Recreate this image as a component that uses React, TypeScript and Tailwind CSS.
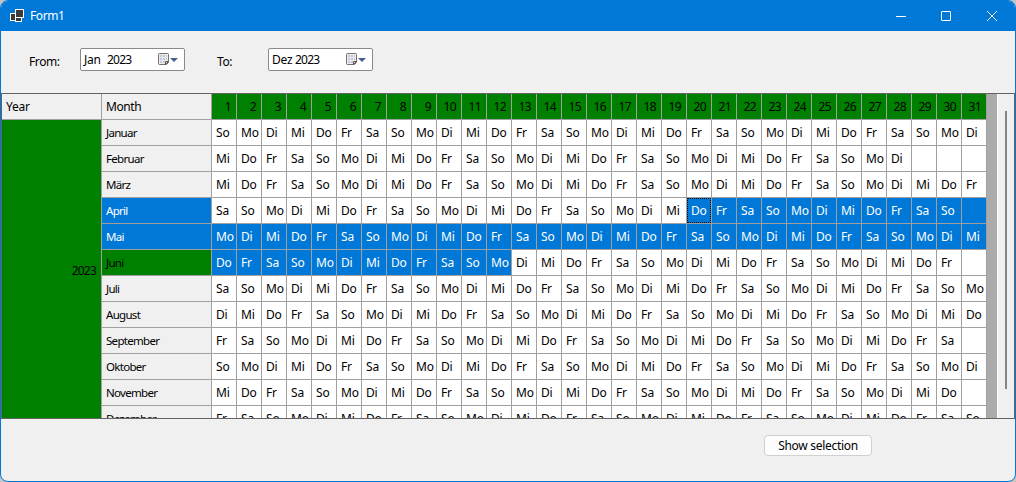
import React from "react";

const WEEKDAYS = ["So", "Mo", "Di", "Mi", "Do", "Fr", "Sa"];
const DAYS = Array.from({ length: 31 }, (_, i) => i + 1);

type Month = { name: string; start: number; length: number; from?: number; to?: number; header?: "blue" | "green" };

const MONTHS: Month[] = [
  { name: "Januar", start: 0, length: 31 },
  { name: "Februar", start: 3, length: 28 },
  { name: "März", start: 3, length: 31 },
  { name: "April", start: 6, length: 30, from: 20, to: 31, header: "blue" },
  { name: "Mai", start: 1, length: 31, from: 1, to: 31, header: "blue" },
  { name: "Juni", start: 4, length: 30, from: 1, to: 12, header: "green" },
  { name: "Juli", start: 6, length: 31 },
  { name: "August", start: 2, length: 31 },
  { name: "September", start: 5, length: 30 },
  { name: "Oktober", start: 0, length: 31 },
  { name: "November", start: 3, length: 30 },
  { name: "Dezember", start: 5, length: 31 },
];

const HEADER_STYLE = {
  blue: "bg-[#0078d7] text-white",
  green: "bg-[#008000] text-black",
  plain: "bg-[#f0f0f0] text-black",
};

function CalendarIcon() {
  return (
    <svg width="12" height="13" viewBox="0 0 12 13" className="shrink-0">
      <path d="M1.500 .5h8a1 1 0 0 1 1 1v8l-2 2h-7a1 1 0 0 1-1-1v-9a1 1 0 0 1 1-1z" fill="#c3cad6" stroke="#7b6f6b" />
      <path d="M1 1.500h9M1.500 1v10M9.500 1v8.500M1 10.500h7.500" stroke="#f1ece9" />
      <path d="M2 4.500h7M2 7.500h7M4.500 2v8M7.500 2v8" stroke="#f5f6f9" strokeWidth=".7" />
      <path d="M7.500 11.500v-3h3z" fill="#f4f1ef" stroke="#5f5552" />
    </svg>
  );
}

function DatePicker({ month, year }: { month: string; year: string }) {
  return (
    <div className="flex h-[23px] w-[105px] items-center rounded-[2px] border border-[#8a8a8a] bg-white pl-[3px] pr-[6px]">
      <span className="w-[23px]">{month}</span>
      <span className="flex-1 tracking-[-0.75px]">{year}</span>
      <CalendarIcon />
      <svg width="8" height="4" viewBox="0 0 8 4">
        <path d="M0 0h8L4 4z" fill="#44608c" />
      </svg>
    </div>
  );
}

function TitleBar() {
  return (
    <header className="flex h-[30px] shrink-0 items-center bg-[#0078d7] pl-[9px] text-white">
      <svg width="14" height="14" viewBox="0 0 14 14">
        <rect x=".5" y="4.500" width="6" height="7" fill="#3a3a3a" stroke="#fff" />
        <rect x="5.500" y="8.500" width="6" height="4" fill="#3a3a3a" stroke="#fff" />
        <rect x="5.500" y=".5" width="8" height="8" fill="#3a3a3a" stroke="#fff" />
      </svg>
      <span className="ml-[6px] flex-1 tracking-[-0.4px]">Form1</span>
      <svg width="120" height="12" viewBox="0 0 120 12" fill="none" stroke="#fff" className="mr-[8px]">
        <path d="M9 6.500h10" />
        <rect x="54.500" y="1.500" width="9" height="9" rx=".5" />
        <path d="M100 1l10 10M110 1l-10 10" />
      </svg>
    </header>
  );
}

function MonthRow({ month }: { month: Month }) {
  return (
    <div className="flex h-[26px] shrink-0">
      <div className={`flex w-[110px] shrink-0 items-center border-b border-r border-[#a0a0a0] pl-[4px] pt-px text-[11.5px] tracking-[-0.7px] ${HEADER_STYLE[month.header ?? "plain"]}`}>
        {month.name}
      </div>
      {DAYS.map((day) => {
        const selected = month.from !== undefined && month.to !== undefined && day >= month.from && day <= month.to;
        const focused = month.name === "April" && day === 20;
        return (
          <div key={day} className={`relative flex w-[25px] shrink-0 items-center whitespace-nowrap border-b border-r border-[#a0a0a0] pl-[4px] ${selected ? "bg-[#0078d7] text-white" : "bg-white text-black"}`}>
            {day <= month.length ? WEEKDAYS[(month.start + day - 1) % 7] : ""}
            {focused && <span className="absolute inset-0 border border-dotted border-black" />}
          </div>
        );
      })}
    </div>
  );
}

function CalendarGrid() {
  return (
    <section className="flex h-[326px] shrink-0 border border-[#646464] bg-[#ababab]">
      <div className="flex w-[100px] shrink-0 flex-col">
        <div className="flex h-[26px] shrink-0 items-center border-b border-r border-[#a0a0a0] bg-[#f0f0f0] pl-[4px]">Year</div>
        <div className="flex flex-1 items-center justify-end border-r border-[#a0a0a0] bg-[#008000] pr-[5px] pt-[4px] tracking-[-0.8px]">2023</div>
      </div>
      <div className="flex w-[885px] shrink-0 flex-col overflow-hidden">
        <div className="flex h-[26px] shrink-0">
          <div className="flex w-[110px] shrink-0 items-center border-b border-r border-[#a0a0a0] bg-[#f0f0f0] pl-[4px] tracking-[-0.4px]">Month</div>
          {DAYS.map((day) => (
            <div key={day} className="flex w-[25px] shrink-0 items-center justify-end border-b border-r border-[#a0a0a0] bg-[#008000] pr-[5px] tracking-[-0.6px]">
              {day}
            </div>
          ))}
        </div>
        {MONTHS.map((month) => (
          <MonthRow key={month.name} month={month} />
        ))}
      </div>
      <div className="ml-auto flex w-[17px] justify-center border-l border-white bg-[#f0f0f0] pr-px pt-[17px]">
        <div className="h-[278px] w-[2px] bg-[#858585]" />
      </div>
    </section>
  );
}

export default function App() {
  return (
    <div className="h-[482px] w-[1016px] overflow-hidden bg-[#c4c4c4] font-['Noto_Sans','Open_Sans',sans-serif] text-[12px] leading-[16px] tracking-[-0.2px] text-black">
      <main className="flex h-full flex-col overflow-hidden rounded-[8px] border border-[#0078d7] bg-[#f0f0f0]">
        <TitleBar />
        <div className="flex h-[62px] shrink-0 pl-[28px] pt-[17px]">
          <span className="w-[51px] pt-[6px] tracking-[-0.4px]">From:</span>
          <DatePicker month="Jan" year="2023" />
          <span className="ml-[32px] w-[51px] pt-[6px] tracking-[-0.4px]">To:</span>
          <DatePicker month="Dez" year="2023" />
        </div>
        <CalendarGrid />
        <footer className="flex flex-1 items-start justify-end pr-[143px] pt-[16px]">
          <button className="h-[21px] w-[108px] rounded-[4px] border border-[#d0d0d0] bg-[#fdfdfd] leading-[19px] tracking-[-0.3px]">Show selection</button>
        </footer>
      </main>
    </div>
  );
}
